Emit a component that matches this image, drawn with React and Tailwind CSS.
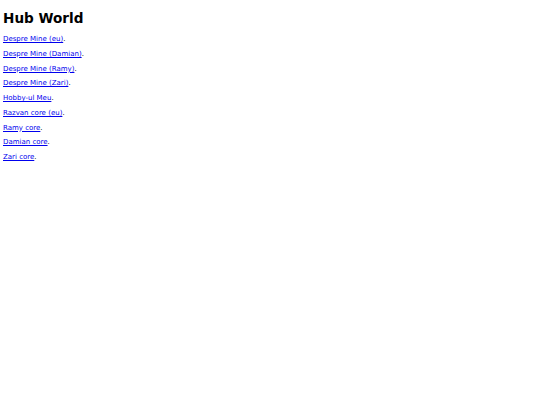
const LINKS = [
  'Despre Mine (eu)',
  'Despre Mine (Damian)',
  'Despre Mine (Ramy)',
  'Despre Mine (Zari)',
  'Hobby-ul Meu',
  'Razvan core (eu)',
  'Ramy core',
  'Damian core',
  'Zari core',
];

export default function App() {
  return (
    <div className="min-h-screen bg-white px-[3px] pt-[10px] text-black" style={{ fontFamily: '"DejaVu Sans", sans-serif' }}>
      <h1 className="text-[13.6px] font-bold leading-[17px] mb-[7px]">Hub World</h1>
      <div className="flex flex-col gap-[4.75px]">
        {LINKS.map((l) => (
          <p key={l} className="text-[7px] leading-[10px]">
            <a href="#" className="text-[#0000ee] underline">{l}</a>.
          </p>
        ))}
      </div>
    </div>
  );
}
